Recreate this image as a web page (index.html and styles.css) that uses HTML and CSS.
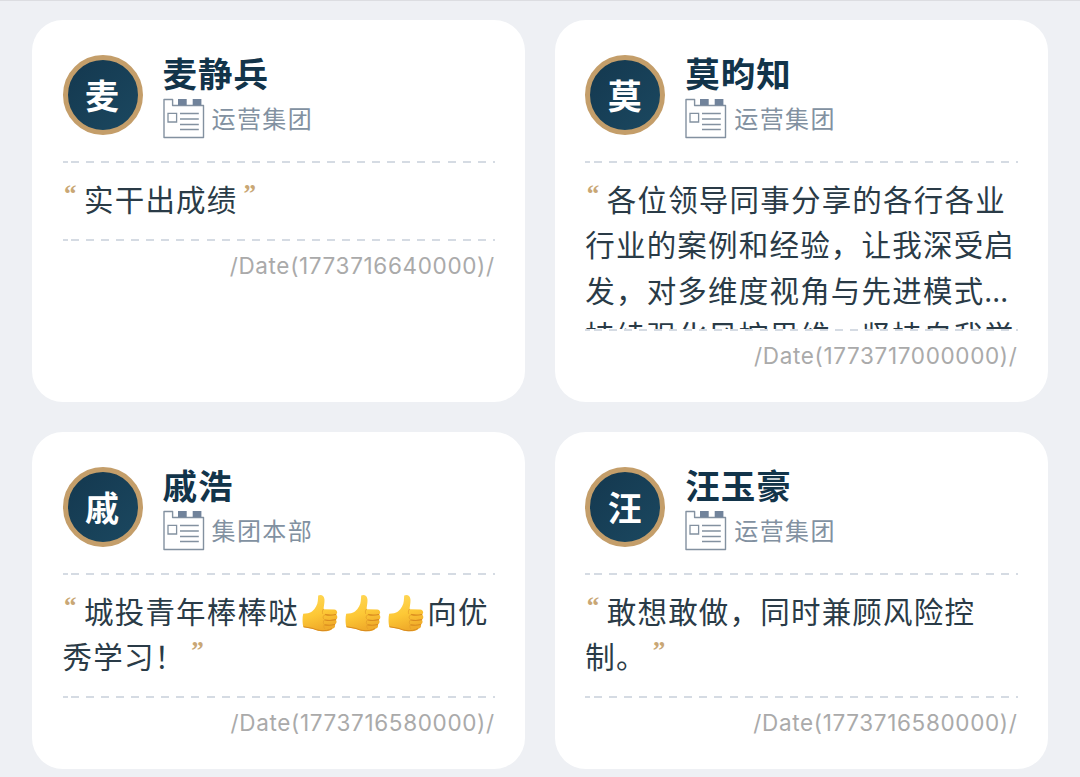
FILE: index.html
```html
<!DOCTYPE html>
<html lang="zh-CN">
<head>
  <meta charset="UTF-8">
  <meta name="viewport" content="width=device-width, initial-scale=1.0">
  <title>学习感言</title>
  <link rel="stylesheet" href="styles.css">
</head>
<body>
  <!-- shared icons -->
  <svg class="sprite" width="0" height="0">
    <defs>
      <linearGradient id="skin" x1="0" y1="0" x2="0.3" y2="1">
        <stop offset="0" stop-color="#ffd95a"/>
        <stop offset="0.6" stop-color="#fdc836"/>
        <stop offset="1" stop-color="#f0ac2a"/>
      </linearGradient>
      <symbol id="icon-dept" viewBox="0 0 42 42">
        <path d="M1 1.500h8.600v6h30.900v32H1z" fill="none" stroke="#8391a0" stroke-width="1.400" stroke-linejoin="round"/>
        <path d="M15 1h8.700v6.200H15zM29.700 1h8.700v6.200h-8.700z" fill="#71839b"/>
        <path d="M5 15.400h8.600v8.600H5zM17 15.500h18.800M17 21h18.800M17 26.500h18.800M17 31.500h18.800" fill="none" stroke="#8391a0" stroke-width="1.300"/>
      </symbol>
      <symbol id="icon-thumb" viewBox="0 0 36 38">
        <path d="M16.200 1.600c2.400-1.500 5.800-.4 6.200 3.400.4 4-.8 7.300-.8 10.300l10.500.1c3.300.2 4 3.700 1.900 5.200 1.800 1.400 1.700 4-.2 5.100 1.300 1.500.9 3.900-1 4.800.8 1.700-.2 3.800-2.300 4.200-2.500 2.500-8 3-13 2.200-4-.6-5.700-2-8.300-2.300L1.400 33.200C.5 30 .1 24.500 1.200 19.800c3.300 0 6.600-.5 8.800-2.200 3.300-2.700 5.600-7.300 5.800-10.600z" fill="url(#skin)"/>
        <path d="M23.500 20.700c3 .7 7.200.5 10.300-.2M23 26c3.300.7 7.600.5 10.600-.3M22.700 30.800c3.200.7 7 .5 9.900-.3" fill="none" stroke="#d98b1f" stroke-width="1.200" stroke-linecap="round"/>
        <path d="M21.400 15.200c-1 1.300-1.300 2.700-.8 4.200M23 20.500c-2.400 1.800-2.400 3.700-.3 5.200-1.800 1.600-1.800 3.500-.3 4.900-1 1.500-.8 3 .5 4.400" fill="none" stroke="#e7a22a" stroke-width=".9" stroke-linecap="round"/>
        <path d="M2 32.800l7 1.300c3 .4 4.500 1.700 8.300 2.300 5 .7 9.500.1 12.300-1.700" fill="none" stroke="#d98b1f" stroke-width="1" stroke-linecap="round"/>
      </symbol>
    </defs>
  </svg>

  <div class="card-list">
    <div class="card">
      <div class="card-header">
        <div class="avatar">麦</div>
        <div class="info">
          <div class="name">麦静兵</div>
          <div class="dept"><svg class="dept-icon"><use href="#icon-dept"/></svg><span class="dept-name">运营集团</span></div>
        </div>
      </div>
      <div class="dashed"></div>
      <div class="content"><span class="quote open">“</span>实干出成绩<span class="quote close">”</span></div>
      <div class="dashed"></div>
      <div class="date">/Date(1773716640000)/</div>
    </div>

    <div class="card">
      <div class="card-header">
        <div class="avatar">莫</div>
        <div class="info">
          <div class="name">莫昀知</div>
          <div class="dept"><svg class="dept-icon"><use href="#icon-dept"/></svg><span class="dept-name">运营集团</span></div>
        </div>
      </div>
      <div class="dashed"></div>
      <div class="content"><span class="quote open">“</span>各位领导同事分享的各行各业<br>行业的案例和经验，让我深受启<br>发，对多维度视角与先进模式<span class="dots">...</span><br>持续强化风控思维，坚持自我学</div>
      <div class="dashed"></div>
      <div class="date">/Date(1773717000000)/</div>
    </div>

    <div class="card">
      <div class="card-header">
        <div class="avatar">戚</div>
        <div class="info">
          <div class="name">戚浩</div>
          <div class="dept"><svg class="dept-icon"><use href="#icon-dept"/></svg><span class="dept-name">集团本部</span></div>
        </div>
      </div>
      <div class="dashed"></div>
      <div class="content"><span class="quote open">“</span>城投青年棒棒哒<svg class="thumb"><use href="#icon-thumb"/></svg><svg class="thumb"><use href="#icon-thumb"/></svg><svg class="thumb"><use href="#icon-thumb"/></svg>向优<br>秀学习！<span class="quote close">”</span></div>
      <div class="dashed"></div>
      <div class="date">/Date(1773716580000)/</div>
    </div>

    <div class="card">
      <div class="card-header">
        <div class="avatar">汪</div>
        <div class="info">
          <div class="name">汪玉豪</div>
          <div class="dept"><svg class="dept-icon"><use href="#icon-dept"/></svg><span class="dept-name">运营集团</span></div>
        </div>
      </div>
      <div class="dashed"></div>
      <div class="content"><span class="quote open">“</span>敢想敢做，同时兼顾风险控<br>制。<span class="quote close">”</span></div>
      <div class="dashed"></div>
      <div class="date">/Date(1773716580000)/</div>
    </div>
  </div>
</body>
</html>
```
FILE: styles.css
```css
* {
  box-sizing: border-box;
}
body {
  margin: 0;
  height: 777px;
  overflow: hidden;
  background: #eef0f4;
  border-top: 1px solid #dcdde1;
  font-family: "Noto Sans CJK SC", sans-serif;
  text-spacing-trim: space-all;
}
.sprite {
  display: block;
}
.card-list {
  display: grid;
  grid-template-columns: 1fr 1fr;
  gap: 30px;
  padding: 19px 32.5px 0 32px;
}
.card {
  padding: 30px 30px 30px 30.5px;
  background: #fff;
  border-radius: 31px;
}
.card-header {
  display: flex;
  align-items: center;
  height: 111px;
  padding-bottom: 21px;
}
.avatar {
  display: flex;
  align-items: center;
  justify-content: center;
  width: 80px;
  height: 80px;
  padding: 0 1px 1px 0;
  border: 5px solid #c49e6a;
  border-radius: 50%;
  background: linear-gradient(135deg, #14384f, #1b4860);
  color: #fff;
  font-size: 34px;
  font-weight: 700;
  line-height: 1;
}
.info {
  margin-left: 20px;
}
.name {
  height: 47px;
  color: #12344a;
  font-size: 34.5px;
  font-weight: 700;
  line-height: 44px;
  letter-spacing: 1px;
}
.dept {
  display: flex;
  align-items: center;
  height: 43px;
  color: #8291a1;
  font-size: 24px;
  font-weight: 400;
  letter-spacing: 1.4px;
}
.dept-icon {
  width: 42px;
  height: 42px;
  margin-right: 7px;
}
.dept-name {
  padding-bottom: 3px;
}
.dashed {
  height: 2px;
  background: repeating-linear-gradient(90deg, #d5dbe3 0 8px, transparent 8px 15.06px) 8.5px 0 no-repeat,
    linear-gradient(#d5dbe3, #d5dbe3) 0 0 / 5px 2px no-repeat;
}
.content {
  min-height: 76px;
  max-height: 166px;
  padding: 13px 0 17px;
  overflow: hidden;
  color: #2a3b47;
  font-size: 29.5px;
  line-height: 45.3px;
  letter-spacing: 1.2px;
  white-space: nowrap;
}
.quote {
  color: #c9a775;
  font-family: "Liberation Serif", serif;
  font-size: 25px;
  font-weight: 700;
  line-height: 0;
  letter-spacing: 0;
  vertical-align: 9px;
}
.quote.open {
  margin: 0 7.5px 0 1.5px;
}
.quote.close {
  margin-left: 6px;
}
.dots {
  font-family: "Noto Sans", sans-serif;
  letter-spacing: 0;
  line-height: 0;
}
.thumb {
  width: 36px;
  height: 38px;
  margin: -10px 3.4px;
  vertical-align: 1px;
}
.date {
  padding-top: 10px;
  color: #aaa;
  font-family: Inter, sans-serif;
  font-size: 22.5px;
  line-height: 30px;
  letter-spacing: 0.65px;
  text-align: right;
}
.date::after {
  content: "";
  display: block;
  height: 1px;
}
```
